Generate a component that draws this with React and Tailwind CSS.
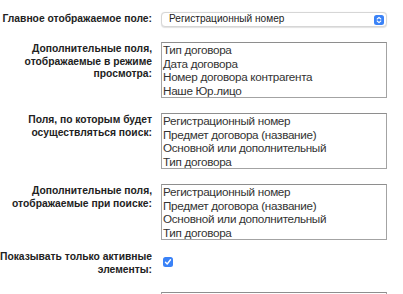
import React from 'react';

const font = { fontFamily: '"Liberation Sans", Arial, sans-serif' };

const rows = [
  {
    label: ['Дополнительные поля,', 'отображаемые в режиме', 'просмотра:'],
    items: ['Тип договора', 'Дата договора', 'Номер договора контрагента', 'Наше Юр.лицо'],
  },
  {
    label: ['Поля, по которым будет', 'осуществляться поиск:'],
    items: ['Регистрационный номер', 'Предмет договора (название)', 'Основной или дополнительный', 'Тип договора'],
  },
  {
    label: ['Дополнительные поля,', 'отображаемые при поиске:'],
    items: ['Регистрационный номер', 'Предмет договора (название)', 'Основной или дополнительный', 'Тип договора'],
  },
];

const Label = ({ lines, className = '' }) => (
  <div className={`w-[152px] shrink-0 text-right text-[10.3px] font-bold leading-[12.5px] text-[#222] ${className}`}>
    {lines.map((l, i) => (
      <div key={i} className="whitespace-nowrap">{l}</div>
    ))}
  </div>
);

const ListBox = ({ items }) => (
  <div className="w-[226px] h-[56px] border border-[#a3a3a3] border-t-[#8e8e8e] bg-white overflow-hidden">
    {items.map((it, i) => (
      <div key={i} className="pl-[1px] text-[11.7px] tracking-[-0.3px] leading-[13.5px] text-[#333] whitespace-nowrap">
        {it}
      </div>
    ))}
  </div>
);

export default function App() {
  return (
    <div className="w-[403px] h-[294px] overflow-hidden bg-white" style={font}>
      <div className="pt-[12px] flex flex-col">
        <div className="flex items-center gap-[9px]">
          <Label lines={['Главное отображаемое поле:']} />
          <div className="w-[226px] h-[15px] rounded-[4px] border border-[#d6d6d6] shadow-[0_0.5px_1px_rgba(0,0,0,0.12)] bg-white flex items-center justify-between pl-[7px] pr-[2px]">
            <span className="text-[10.1px] leading-none text-[#222]">Регистрационный номер</span>
            <span className="w-[10px] h-[10px] rounded-[2.5px] bg-[#3a82f7] flex items-center justify-center">
              <svg width="6" height="8" viewBox="0 0 6 8" fill="none" stroke="white" strokeWidth="1.1" strokeLinecap="round" strokeLinejoin="round">
                <path d="M1.2 3 L3 1.3 L4.8 3" />
                <path d="M1.2 5 L3 6.7 L4.8 5" />
              </svg>
            </span>
          </div>
        </div>

        {rows.map((r, i) => (
          <div key={i} className="flex items-start gap-[9px] mt-[15px]">
            <Label lines={r.label} className="pt-[1px]" />
            <ListBox items={r.items} />
          </div>
        ))}

        <div className="flex items-start gap-[9px] mt-[11px]">
          <Label lines={['Показывать только активные', 'элементы:']} />
          <span className="mt-[6px] ml-[2px] w-[10px] h-[10px] rounded-[2.5px] bg-[#3a82f7] flex items-center justify-center">
            <svg width="8" height="8" viewBox="0 0 8 8" fill="none" stroke="white" strokeWidth="1.4" strokeLinecap="round" strokeLinejoin="round">
              <path d="M1.5 4.2 L3.2 6 L6.5 1.8" />
            </svg>
          </span>
        </div>

        <div className="flex items-start gap-[9px] mt-[16px]">
          <Label lines={['']} />
          <ListBox items={[]} />
        </div>
      </div>
    </div>
  );
}
